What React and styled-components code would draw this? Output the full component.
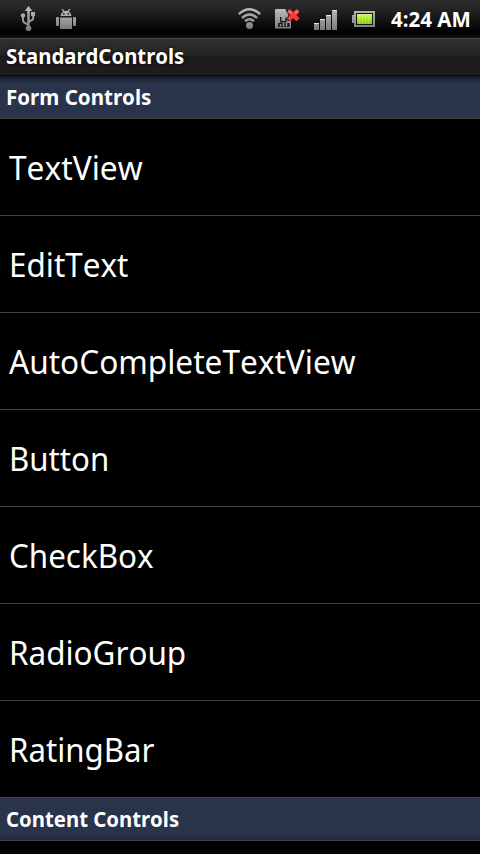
import React from 'react';
import styled, { createGlobalStyle } from 'styled-components';

const GlobalStyle = createGlobalStyle`
  * { box-sizing: border-box; }
  body { margin: 0; background: #000; overflow: hidden; }
`;

const Screen = styled.main`
  display: flex;
  flex-direction: column;
  height: 854px;
  overflow: hidden;
  background: #000;
  color: #fff;
  font-family: 'Noto Sans', 'Open Sans', sans-serif;
  font-kerning: none;
  font-variant-ligatures: none;
  white-space: nowrap;
`;

const StatusBar = styled.header`
  flex: none;
  display: flex;
  align-items: flex-start;
  height: 38px;
  background: linear-gradient(#2c2c2c 0, #262626 8px, #060606 28px, #000 32px, #141414 38px);
`;

const Icon = styled.svg`
  flex: none;
  display: block;
  margin-left: ${(p) => p.$gap}px;
`;

/* Text set slightly condensed, anchored at its left edge. */
const Label = styled.span`
  display: inline-block;
  transform: scaleX(${(p) => p.$condense});
  transform-origin: 0 50%;
`;

const Clock = styled.time`
  margin-left: 15px;
  font-size: 21px;
  font-weight: 700;
  line-height: 38px;
`;

const TitleBar = styled.h1`
  flex: none;
  height: 38px;
  margin: 0;
  padding-left: 6px;
  border-top: 1px solid #484848;
  border-bottom: 1px solid #050505;
  background: linear-gradient(#303030 0, #242424 17px, #1b1b1b 17px, #1d1d1d 100%);
  font-size: 21px;
  font-weight: 700;
  line-height: 34px;
  text-shadow: 0 0 3px #000;
`;

const SectionHeader = styled.h2`
  flex: none;
  height: 43px;
  margin: 0;
  padding-left: 6px;
  border-bottom: 1px solid #424242;
  background: ${(p) => (p.$shaded ? 'linear-gradient(#12161f 0, #202839 3px, #29344b 8px)' : 'linear-gradient(#29344b 37px, #222b3e 42px)')};
  font-size: 21px;
  font-weight: 700;
  line-height: 42px;
`;

const List = styled.ul`
  flex: none;
  margin: 0;
  padding: 0;
  list-style: none;
`;

const ListRow = styled.li`
  height: 97px;
  padding-left: 9px;
  border-bottom: 1px solid #424242;
  font-size: 33px;
  line-height: 98px;
`;

const controls = [
  { label: 'TextView', condense: 0.96 },
  { label: 'EditText', condense: 0.952 },
  { label: 'AutoCompleteTextView', condense: 0.957 },
  { label: 'Button', condense: 0.945 },
  { label: 'CheckBox', condense: 0.95 },
  { label: 'RadioGroup', condense: 0.952 },
  { label: 'RatingBar', condense: 0.945 },
];

const Metal = ({ id }) => (
  <defs>
    <linearGradient id={id} gradientUnits="userSpaceOnUse" x1="0" y1="6" x2="0" y2="31">
      <stop offset="0" stopColor="#c4c4c4" />
      <stop offset="1" stopColor="#777" />
    </linearGradient>
  </defs>
);

const UsbIcon = () => (
  <Icon width="16" height="38" viewBox="20 0 16 38" $gap={20}>
    <Metal id="usb" />
    <g fill="url(#usb)">
      <path d="M28.5 6 32.300 11H24.700Z" />
      <rect x="27.300" y="9" width="2.400" height="18" />
      <circle cx="28.5" cy="28.3" r="2.8" />
      <circle cx="23" cy="15.5" r="2.200" />
      <rect x="31" y="12" width="4" height="4" />
    </g>
    <path d="M23 16v4.500q0 1.500 2 2.500l3 1.500M33.200 15v3q0 2-2 2.500l-2.500 1" fill="none" stroke="url(#usb)" strokeWidth="2" />
  </Icon>
);

const AndroidIcon = () => (
  <Icon width="20" height="38" viewBox="56 0 20 38" $gap={20}>
    <Metal id="droid" />
    <g fill="url(#droid)">
      <path d="M60.500 16q.3-3.500 2.700-4.500l-1.500-2 1-.7 1.600 2.200q1.700-.5 3.400 0l1.600-2.200 1 .7-1.500 2q2.400 1 2.700 4.500Z" />
      <rect x="60" y="17.500" width="12" height="11.500" />
      <rect x="56" y="17" width="3" height="9" rx=".8" />
      <rect x="73" y="17" width="3" height="9" rx=".8" />
    </g>
    <rect x="63" y="13" width="1.500" height="1.500" fill="#222" />
    <rect x="67.500" y="13" width="1.500" height="1.500" fill="#222" />
  </Icon>
);

const WifiIcon = () => (
  <Icon width="24" height="38" viewBox="238 0 24 38" $gap={162}>
    <Metal id="wifi" />
    <g fill="none" stroke="url(#wifi)" strokeWidth="2.500">
      <path d="M238.800 14.200q10.700-10 21.400 0" />
      <path d="M242 18q7.500-7 15 0" />
      <path d="M245 21.300q4.500-4 9 0" />
    </g>
    <circle cx="249.500" cy="25.500" r="3.500" fill="url(#wifi)" />
  </Icon>
);

const SimIcon = () => (
  <Icon width="26" height="38" viewBox="275 0 26 38" $gap={13}>
    <Metal id="sim" />
    <path d="M276 9h9.500l1 3 2 3-2 4 1.500 2h3v7.500H276q-1 0-1-1V10q0-1 1-1Z" fill="url(#sim)" />
    <path d="M280.700 17v4.700h5.300V17.500" fill="none" stroke="#161616" strokeWidth="1.400" />
    <path d="M278 23h11.500v4H278Z" fill="#161616" />
    <path d="M280.500 24v2.500M283.500 23v3.500M286.500 23v3.500" stroke="#9a9a9a" strokeWidth="1.500" />
    <path d="m288.500 10.500 9.500 9.300m0-9.300-9.500 9.300" stroke="#f23c3c" strokeWidth="4.300" />
    <path d="m288.500 10.500 3 3m6.500-3-3 3" stroke="#ff6a66" strokeWidth="2" />
  </Icon>
);

const SignalIcon = () => (
  <Icon width="24" height="38" viewBox="314 0 24 38" $gap={13}>
    <Metal id="signal" />
    <g fill="url(#signal)">
      <rect x="314" y="23" width="5" height="7" />
      <rect x="320" y="19" width="5" height="11" />
      <rect x="326" y="15" width="5" height="15" />
      <rect x="332" y="10" width="5" height="20" />
    </g>
    <path d="M314 23.500h5M320 19.500h5M326 15.500h5M332 10.500h5" stroke="#e4e4e4" />
  </Icon>
);

const BatteryIcon = () => (
  <Icon width="24" height="38" viewBox="352 0 24 38" $gap={14}>
    <defs>
      <linearGradient id="charge" x1="0" y1="0" x2="0" y2="1">
        <stop offset="0" stopColor="#d2f288" />
        <stop offset=".35" stopColor="#b4ec2c" />
        <stop offset="1" stopColor="#84cc00" />
      </linearGradient>
    </defs>
    <Metal id="case" />
    <path d="M354 11h21v16h-21v-4h-2v-8h2Z" fill="url(#case)" />
    <rect x="356" y="13" width="17" height="12" fill="#151515" />
    <rect x="357" y="14" width="15" height="10" fill="url(#charge)" />
    <path d="M359.500 14v10M362.500 14v10M365.500 14v10M368.500 14v10" stroke="#fff" strokeOpacity=".2" />
  </Icon>
);

export default function App() {
  return (
    <>
      <GlobalStyle />
      <Screen>
        <StatusBar>
          <UsbIcon />
          <AndroidIcon />
          <WifiIcon />
          <SimIcon />
          <SignalIcon />
          <BatteryIcon />
          <Clock><Label $condense={0.975}>4:24 AM</Label></Clock>
        </StatusBar>
        <TitleBar><Label $condense={0.968}>StandardControls</Label></TitleBar>
        <SectionHeader $shaded><Label $condense={0.978}>Form Controls</Label></SectionHeader>
        <List>
          {controls.map(({ label, condense }) => (
            <ListRow key={label}><Label $condense={condense}>{label}</Label></ListRow>
          ))}
        </List>
        <SectionHeader><Label $condense={0.968}>Content Controls</Label></SectionHeader>
      </Screen>
    </>
  );
}
